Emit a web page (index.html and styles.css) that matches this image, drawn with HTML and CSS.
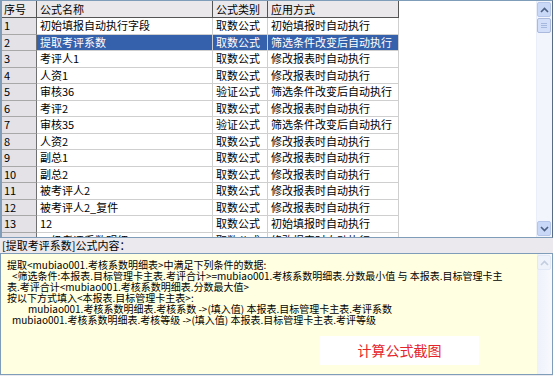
FILE: index.html
```html
<!DOCTYPE html>
<html lang="zh-CN">
<head>
    <meta charset="UTF-8">
    <title>计算公式</title>
    <link rel="stylesheet" href="styles.css">
</head>
<body>
    <div class="grid-box">
        <div class="grid">
            <div class="row head">
                <div class="cell num">序号</div>
                <div class="cell">公式名称</div>
                <div class="cell">公式类别</div>
                <div class="cell">应用方式</div>
            </div>
            <div class="row"><div class="cell num">1</div><div class="cell">初始填报自动执行字段</div><div class="cell">取数公式</div><div class="cell">初始填报时自动执行</div></div>
            <div class="row selected"><div class="cell num">2</div><div class="cell">提取考评系数</div><div class="cell">取数公式</div><div class="cell">筛选条件改变后自动执行</div></div>
            <div class="row"><div class="cell num">3</div><div class="cell">考评人1</div><div class="cell">取数公式</div><div class="cell">修改报表时自动执行</div></div>
            <div class="row"><div class="cell num">4</div><div class="cell">人资1</div><div class="cell">取数公式</div><div class="cell">修改报表时自动执行</div></div>
            <div class="row"><div class="cell num">5</div><div class="cell">审核36</div><div class="cell">验证公式</div><div class="cell">筛选条件改变后自动执行</div></div>
            <div class="row"><div class="cell num">6</div><div class="cell">考评2</div><div class="cell">取数公式</div><div class="cell">修改报表时自动执行</div></div>
            <div class="row"><div class="cell num">7</div><div class="cell">审核35</div><div class="cell">验证公式</div><div class="cell">筛选条件改变后自动执行</div></div>
            <div class="row"><div class="cell num">8</div><div class="cell">人资2</div><div class="cell">取数公式</div><div class="cell">修改报表时自动执行</div></div>
            <div class="row"><div class="cell num">9</div><div class="cell">副总1</div><div class="cell">取数公式</div><div class="cell">修改报表时自动执行</div></div>
            <div class="row"><div class="cell num">10</div><div class="cell">副总2</div><div class="cell">取数公式</div><div class="cell">修改报表时自动执行</div></div>
            <div class="row"><div class="cell num">11</div><div class="cell">被考评人2</div><div class="cell">取数公式</div><div class="cell">修改报表时自动执行</div></div>
            <div class="row"><div class="cell num">12</div><div class="cell">被考评人2_复件</div><div class="cell">取数公式</div><div class="cell">修改报表时自动执行</div></div>
            <div class="row"><div class="cell num">13</div><div class="cell">12</div><div class="cell">取数公式</div><div class="cell">初始填报时自动执行</div></div>
            <div class="row"><div class="cell num">14</div><div class="cell">一级考评系数明细</div><div class="cell">取数公式</div><div class="cell">修改报表时自动执行</div></div>
        </div>
        <div class="vscroll">
            <div class="sbtn">
                <svg width="9" height="6" viewBox="0 0 9 6"><path d="M1 5 L4.5 1.5 L8 5" fill="none" stroke="#4d6185" stroke-width="1.6"/></svg>
            </div>
            <div class="thumb">
                <svg width="6" height="7" viewBox="0 0 6 7"><path d="M0 1.5h6M0 3.5h6M0 5.5h6" stroke="#a6b8de" stroke-width="1"/></svg>
            </div>
            <div class="track"></div>
            <div class="sbtn">
                <svg width="9" height="6" viewBox="0 0 9 6"><path d="M1 1 L4.5 4.5 L8 1" fill="none" stroke="#4d6185" stroke-width="1.6"/></svg>
            </div>
        </div>
    </div>

    <div class="caption">[提取考评系数]公式内容：</div>

    <div class="formula-box">
        <div class="formula">
            <div class="line">提取&lt;mubiao001.考核系数明细表&gt;中满足下列条件的数据:</div>
            <div class="line ind1">&lt;筛选条件:本报表.目标管理卡主表.考评合计&gt;=mubiao001.考核系数明细表.分数最小值 与 本报表.目标管理卡主</div>
            <div class="line">表.考评合计&lt;mubiao001.考核系数明细表.分数最大值&gt;</div>
            <div class="line">按以下方式填入&lt;本报表.目标管理卡主表&gt;:</div>
            <div class="line ind2">mubiao001.考核系数明细表.考核系数 -&gt;(填入值) 本报表.目标管理卡主表.考评系数</div>
            <div class="line ind1">mubiao001.考核系数明细表.考核等级 -&gt;(填入值) 本报表.目标管理卡主表.考评等级</div>
            <div class="note-wrap">
                <div class="note">计算公式截图</div>
            </div>
        </div>
        <div class="vscroll light">
            <div class="sbtn">
                <svg width="9" height="6" viewBox="0 0 9 6"><path d="M1 5 L4.5 1.5 L8 5" fill="none" stroke="#c3cde0" stroke-width="1.6"/></svg>
            </div>
            <div class="track"></div>
        </div>
    </div>
</body>
</html>
```

FILE: styles.css
```css
body {
    margin: 0;
    width: 553px;
    height: 376px;
    overflow: hidden;
    background-color: #ebe9ee;
    font-family: "Noto Sans CJK SC", "DejaVu Sans", sans-serif;
    font-size: 11px;
    color: #000;
}
.grid-box {
    display: flex;
    height: 238px;
    box-sizing: border-box;
    border: 1px solid #7f9db9;
    border-left-width: 2px;
    border-right-color: #5a6b84;
    background: #fff;
}
.grid {
    flex: 1;
    overflow: hidden;
}
.row {
    display: grid;
    grid-template-columns: 35px 176px 55px 131px;
    height: 16.5px;
}
.cell {
    box-sizing: border-box;
    padding-left: 3px;
    line-height: 15.5px;
    white-space: nowrap;
    overflow: hidden;
    border-right: 1px solid #cfcfcf;
    border-bottom: 1px solid #cfcfcf;
}
.cell.num {
    background: #e4e2e6;
    border-right-color: #707070;
    border-bottom-color: #a8a8a8;
    padding-left: 2px;
}
.head {
    height: 17px;
}
.head .cell {
    background: #ebe8ec;
    border-right-color: #555;
    border-bottom-color: #555;
    line-height: 16px;
}
.selected .cell {
    background: #3560ab;
    color: #fff;
}
.selected .cell.num {
    background: #e4e2e6;
    color: #000;
}
.vscroll {
    width: 15px;
    display: flex;
    flex-direction: column;
    background: #f2f5fc;
    border-left: 1px solid #e9eef9;
}
.sbtn {
    height: 15px;
    margin: 1px 1px 0 0;
    display: flex;
    align-items: center;
    justify-content: center;
    background: #c9d8f6;
    border: 1px solid #b6c6ea;
    border-radius: 2px;
    box-sizing: border-box;
}
.thumb {
    height: 15px;
    margin: 1px 1px 0 0;
    display: flex;
    align-items: center;
    justify-content: center;
    background: #d3def8;
    border: 1px solid #aab9dc;
    border-radius: 2px;
    box-sizing: border-box;
}
.track {
    flex: 1;
}
.vscroll .sbtn:last-child {
    margin-bottom: 1px;
}
.caption {
    height: 15px;
    line-height: 15px;
    padding-left: 2px;
    font-size: 11px;
}
.formula-box {
    display: flex;
    height: 122px;
    box-sizing: border-box;
    border: 1px solid #7f9db9;
    background: #ffffe1;
}
.formula {
    flex: 1;
    padding: 5px 0 0 6px;
    font-size: 10px;
    line-height: 11px;
    overflow: hidden;
}
.line {
    white-space: pre;
    height: 11px;
}
.ind1 {
    padding-left: 5px;
}
.ind2 {
    padding-left: 21px;
}
.note-wrap {
    display: flex;
    padding: 11px 0 0 313px;
}
.note {
    width: 159px;
    height: 29px;
    line-height: 29px;
    background: #fff;
    color: #e5242b;
    font-size: 14px;
    text-align: center;
}
.vscroll.light {
    background: linear-gradient(to right, #eef1fb, #f8f9fe);
    border-left: none;
}
.vscroll.light .sbtn {
    background: #eef2fb;
    border-color: #e2e8f6;
}
```
